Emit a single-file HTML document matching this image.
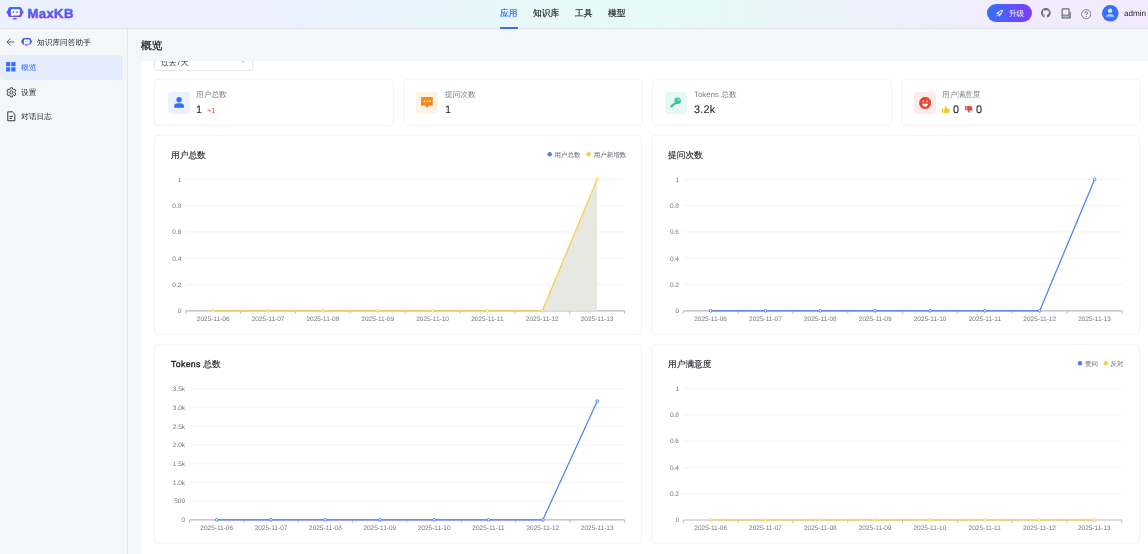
<!DOCTYPE html><html><head><meta charset="utf-8"><style>
html,body{text-rendering:geometricPrecision;-webkit-font-smoothing:antialiased;margin:0;padding:0;width:1148px;height:554px;overflow:hidden;background:#f5f6f7;font-family:"Liberation Sans",sans-serif}
.t{position:absolute;white-space:nowrap;will-change:transform}
.b{position:absolute;will-change:transform}
</style></head><body>
<div class="b" style="left:0.00px;top:0.00px;width:1148.00px;height:29.00px;background:linear-gradient(90deg,#ebf1ff 24.34%,#e5fbf8 56.18%,#f2ebfe 90.18%);border-bottom:1px solid #e1e6f0;box-sizing:border-box"></div>
<svg class="b" style="left:6.06px;top:5.90px" width="20.00" height="16.00" viewBox="0 0 20.000 16.000"><defs><linearGradient id="lg" x1="0" y1="0" x2="0" y2="1"><stop offset="0" stop-color="#3370ff"/><stop offset="1" stop-color="#7f3bf5"/></linearGradient></defs><g transform="translate(2 1) scale(1.0)">
<rect x="0" y="0" width="13.94" height="10.1" rx="2.6" fill="url(#lg)"/>
<path d="M3.74 2.3h7.3c.45 0 .8.35.8.8v4.7c0 .45-.35.8-.8.8H5.2L3.7 9.4 3.3 8.5c-.25-.1-.36-.4-.36-.7V3.1c0-.45.35-.8.8-.8z" fill="#fff"/>
<rect x="-1.3" y="3.6" width="1.4" height="3.2" rx=".3" fill="#5560f8"/>
<rect x="13.84" y="3.6" width="1.5" height="3.2" rx=".3" fill="#5d58f8"/>
<rect x="4.74" y="4.1" width="1.3" height="1.9" rx=".6" fill="#4466fb"/>
<rect x="8.44" y="4.1" width="1.3" height="1.9" rx=".6" fill="#4466fb"/>
<rect x="5.04" y="10.9" width="3.6" height="1.5" rx=".3" fill="#4a62fb"/>
</g></svg>
<svg class="b" style="left:26px;top:4px" width="52" height="20" viewBox="0 0 52 20">
<defs><linearGradient id="lg3" x1="0" y1="0" x2="0" y2="1"><stop offset="0.2" stop-color="#3370ff"/><stop offset="0.85" stop-color="#7f3bf5"/></linearGradient></defs>
<text x="1.6" y="13.8" font-family="Liberation Sans" font-weight="700" font-size="13.1" fill="url(#lg3)" stroke="url(#lg3)" stroke-width="0.5" letter-spacing="0.35">MaxKB</text>
</svg>
<div class="t" style="left:500.00px;top:7.24px;font-size:8.75px;line-height:13.12px;color:#3370ff;font-weight:500;-webkit-text-stroke:0.2px currentColor">应用</div>
<div class="t" style="left:533.00px;top:7.24px;font-size:8.75px;line-height:13.12px;color:#1f2329;font-weight:500;-webkit-text-stroke:0.2px currentColor">知识库</div>
<div class="t" style="left:575.20px;top:7.24px;font-size:8.75px;line-height:13.12px;color:#1f2329;font-weight:500;-webkit-text-stroke:0.2px currentColor">工具</div>
<div class="t" style="left:608.00px;top:7.24px;font-size:8.75px;line-height:13.12px;color:#1f2329;font-weight:500;-webkit-text-stroke:0.2px currentColor">模型</div>
<div class="b" style="left:500.00px;top:27.00px;width:17.60px;height:1.60px;background:#3370ff"></div>
<div class="b" style="left:987.30px;top:4.40px;width:44.90px;height:17.80px;background:linear-gradient(90deg,#3370ff,#7f3bf5);border-radius:9px"></div>
<svg class="b" style="left:996.4px;top:9.5px" width="6.8" height="6.8" viewBox="0 0 16 16"><g fill="none" stroke="#fff" stroke-width="2.2" stroke-linejoin="round" stroke-linecap="round"><path d="M14.8 1.2C9.8 1.2 6.3 4.2 4.8 8.4l2.8 2.8c4.2-1.5 7.2-5 7.2-10z"/><path d="M4.8 8.4H1.6l2.6-3.2h3M7.6 11.2v3.2l3.2-2.6v-3"/><path d="M3.4 12.6l-1.6 1.6"/></g></svg>
<div class="t" style="left:1008.50px;top:8.00px;font-size:7.6px;line-height:11.40px;color:#ffffff;font-weight:400;">升级</div>
<svg class="b" style="left:1041.3px;top:8.3px" width="9.7" height="9.7" viewBox="0 0 16 16"><path fill="#646a73" d="M8 0C3.58 0 0 3.58 0 8c0 3.54 2.29 6.53 5.47 7.59.4.07.55-.17.55-.38 0-.19-.01-.82-.01-1.49-2.01.37-2.53-.49-2.69-.94-.09-.23-.48-.94-.82-1.13-.28-.15-.68-.52-.01-.53.63-.01 1.080.58 1.23.82.72 1.21 1.87.87 2.33.66.07-.52.28-.87.51-1.07-1.78-.2-3.64-.89-3.64-3.95 0-.87.31-1.59.82-2.15-.08-.2-.36-1.02.08-2.12 0 0 .67-.21 2.2.82.64-.18 1.32-.27 2-.27.68 0 1.36.09 2 .27 1.53-1.04 2.2-.82 2.2-.82.44 1.1.16 1.92.08 2.12.51.56.82 1.27.82 2.15 0 3.07-1.87 3.75-3.65 3.95.29.25.54.73.54 1.48 0 1.07-.01 1.93-.01 2.2 0 .21.15.46.55.38A8.013 8.013 0 0016 8c0-4.42-3.58-8-8-8z"/></svg>
<svg class="b" style="left:1061.4px;top:8px" width="10" height="10.8" viewBox="0 0 10 10.8"><path d="M1.2 9.6V1.8c0-.5.3-.9.9-.9h5c.5 0 .9.4.9.9v7.8" fill="none" stroke="#646a73" stroke-width="1.15"/><path d="M1.2 7.2h6.8" stroke="#646a73" stroke-width="1.1"/><path d="M0.6 9.9h8.6V4.2" fill="none" stroke="#646a73" stroke-width="1.2"/><rect x="1.8" y="7.7" width="5.8" height="1.5" fill="#aeb2b9"/></svg>
<svg class="b" style="left:1081px;top:8.6px" width="10.4" height="10.4" viewBox="0 0 16 16"><circle cx="8" cy="8" r="7" fill="none" stroke="#646a73" stroke-width="1.3"/><path d="M5.9 6.3c0-1.3 1-2.2 2.1-2.2s2.2.9 2.2 2c0 1.5-2.1 1.6-2.1 3.2" fill="none" stroke="#646a73" stroke-width="1.4"/><circle cx="8.1" cy="11.6" r=".9" fill="#646a73"/></svg>
<svg class="b" style="left:1102.2px;top:5.0px" width="16.6" height="16.6" viewBox="0 0 24 24"><defs><linearGradient id="av" x1="0" y1="0" x2="0" y2="1"><stop offset="0" stop-color="#fff" stop-opacity=".85"/><stop offset="1" stop-color="#fff" stop-opacity=".25"/></linearGradient></defs><circle cx="12" cy="12" r="12" fill="#3370ff"/><circle cx="11.7" cy="8.2" r="3.3" fill="#fff" fill-opacity=".8"/><path d="M5.2 18c0-3 3-4.6 6.5-4.6s6.5 1.6 6.5 4.6z" fill="url(#av)"/></svg>
<div class="t" style="left:1124.00px;top:7.92px;font-size:8.1px;line-height:12.15px;color:#1f2329;font-weight:400;">admin</div>
<div class="b" style="left:0.00px;top:29.00px;width:128.00px;height:525.00px;background:#f5f6f7;border-right:1px solid #e4e6e9;box-sizing:border-box"></div>
<svg class="b" style="left:5.8px;top:38px" width="8.6" height="8" viewBox="0 0 16 15"><path d="M15.2 7.5H2.2M8.2 1.1L1.6 7.5l6.6 6.4" fill="none" stroke="#1f2329" stroke-width="1.35"/></svg>
<svg class="b" style="left:19.90px;top:36.80px" width="13.10" height="10.48" viewBox="0 0 13.100 10.480"><defs><linearGradient id="lg2" x1="0" y1="0" x2="0" y2="1"><stop offset="0" stop-color="#3370ff"/><stop offset="1" stop-color="#7f3bf5"/></linearGradient></defs><g transform="translate(2 1) scale(0.655)">
<rect x="0" y="0" width="13.94" height="10.1" rx="2.6" fill="url(#lg2)"/>
<path d="M3.74 2.3h7.3c.45 0 .8.35.8.8v4.7c0 .45-.35.8-.8.8H5.2L3.7 9.4 3.3 8.5c-.25-.1-.36-.4-.36-.7V3.1c0-.45.35-.8.8-.8z" fill="#fff"/>
<rect x="-1.3" y="3.6" width="1.4" height="3.2" rx=".3" fill="#5560f8"/>
<rect x="13.84" y="3.6" width="1.5" height="3.2" rx=".3" fill="#5d58f8"/>
<rect x="4.74" y="4.1" width="1.3" height="1.9" rx=".6" fill="#4466fb"/>
<rect x="8.44" y="4.1" width="1.3" height="1.9" rx=".6" fill="#4466fb"/>
<rect x="5.04" y="10.9" width="3.6" height="1.5" rx=".3" fill="#4a62fb"/>
</g></svg>
<div class="t" style="left:37.40px;top:37.12px;font-size:7.7px;line-height:11.55px;color:#1f2329;font-weight:500;">知识库问答助手</div>
<div class="b" style="left:0.00px;top:55.00px;width:122.80px;height:24.50px;background:#e5ecfb;border-radius:4px"></div>
<svg class="b" style="left:6.3px;top:62.3px" width="9.6" height="9.6" viewBox="0 0 10 10"><rect x="0" y="0" width="4.4" height="4.4" rx=".5" fill="#3370ff"/><rect x="5.5" y="0" width="4.4" height="4.4" rx=".5" fill="#3370ff"/><rect x="0" y="5.5" width="4.4" height="4.4" rx=".5" fill="#3370ff"/><rect x="5.5" y="5.5" width="4.4" height="4.4" rx=".5" fill="#3370ff"/></svg>
<div class="t" style="left:20.80px;top:61.82px;font-size:7.7px;line-height:11.55px;color:#3370ff;font-weight:500;">概览</div>
<svg class="b" style="left:5.6px;top:86.6px" width="10.8" height="10.8" viewBox="0 0 16 16"><path fill="none" stroke="#1f2329" stroke-width="1.3" stroke-linejoin="round" d="M6.6 1.2h2.8l.5 2 1.3.75 2-.6 1.4 2.4-1.5 1.45v1.5l1.5 1.45-1.4 2.4-2-.6-1.3.75-.5 2H6.6l-.5-2-1.3-.75-2 .6-1.4-2.4 1.5-1.45v-1.5L1.4 5.75l1.4-2.4 2 .6 1.3-.75z"/><circle cx="8" cy="8" r="2.3" fill="none" stroke="#1f2329" stroke-width="1.3"/></svg>
<div class="t" style="left:20.80px;top:86.82px;font-size:7.7px;line-height:11.55px;color:#1f2329;font-weight:500;">设置</div>
<svg class="b" style="left:6.8px;top:111.1px" width="8.6" height="10.6" viewBox="0 0 12 15"><path fill="none" stroke="#1f2329" stroke-width="1.3" stroke-linejoin="round" d="M1 1.2h6.5L11 4.7v9.1H1z"/><path fill="none" stroke="#1f2329" stroke-width="1.3" d="M3.5 7.5h5M3.5 10.3h3.5"/></svg>
<div class="t" style="left:20.80px;top:111.02px;font-size:7.7px;line-height:11.55px;color:#1f2329;font-weight:500;">对话日志</div>
<div class="b" style="left:128.00px;top:29.00px;width:1020.00px;height:525.00px;background:#f5f6f7"></div>
<div class="t" style="left:140.90px;top:39.21px;font-size:10.65px;line-height:15.98px;color:#1f2329;font-weight:500;-webkit-text-stroke:0.3px #1f2329">概览</div>
<div class="b" style="left:141px;top:60.8px;width:1007px;height:493.2px;background:#fff;overflow:hidden">
<div class="b" style="left:13.3px;top:-8px;width:98.8px;height:17.9px;border:1px solid #e4e6e9;border-radius:3px;box-sizing:border-box"></div>
<div class="t" style="left:20px;top:-4.3px;font-size:7.7px;line-height:12px;color:#1f2329">过去7天</div>
<svg class="b" style="left:99.9px;top:-0.6px" width="4.4" height="3" viewBox="0 0 10 6.6"><path d="M1 1l4 4.2 4-4.2" fill="none" stroke="#8f959e" stroke-width="1.3"/></svg>
</div>
<div class="b" style="left:154.30px;top:79.30px;width:239.60px;height:46.70px;border:1px solid #f2f3f4;border-radius:4px;box-sizing:border-box;background:#fff"></div>
<div class="b" style="left:402.75px;top:79.30px;width:239.60px;height:46.70px;border:1px solid #f2f3f4;border-radius:4px;box-sizing:border-box;background:#fff"></div>
<div class="b" style="left:651.70px;top:79.30px;width:239.60px;height:46.70px;border:1px solid #f2f3f4;border-radius:4px;box-sizing:border-box;background:#fff"></div>
<div class="b" style="left:900.60px;top:79.30px;width:239.60px;height:46.70px;border:1px solid #f2f3f4;border-radius:4px;box-sizing:border-box;background:#fff"></div>
<div class="b" style="left:167.90px;top:91.80px;width:21.80px;height:21.90px;background:#ebf1ff;border-radius:3.5px"></div>
<div class="b" style="left:416.35px;top:91.80px;width:21.80px;height:21.90px;background:#fff3e6;border-radius:3.5px"></div>
<div class="b" style="left:665.30px;top:91.80px;width:21.80px;height:21.90px;background:#e6f8f4;border-radius:3.5px"></div>
<div class="b" style="left:914.20px;top:91.80px;width:21.80px;height:21.90px;background:#fdeceb;border-radius:3.5px"></div>
<svg class="b" style="left:173.60px;top:97.2px" width="10.2" height="10.8" viewBox="0 0 10.2 10.8"><circle cx="5.1" cy="2.75" r="2.65" fill="#3370ff"/><path d="M0.1 10.8V9.4c0-1.9 1.5-3.1 3.4-3.1h3.2c1.9 0 3.4 1.2 3.4 3.1v1.4z" fill="#3370ff"/></svg>
<svg class="b" style="left:421.05px;top:97.2px" width="12" height="11.4" viewBox="0 0 12 11.4"><path d="M0.1 0.1h11.7v8.6H7.7L6.1 11.2 4.5 8.7H0.1z" fill="#f5891f"/><rect x="2.8" y="3.65" width="1.3" height="1.3" fill="#fff"/><rect x="5.5" y="3.65" width="1.3" height="1.3" fill="#fff"/><rect x="8.2" y="3.65" width="1.3" height="1.3" fill="#fff"/></svg>
<svg class="b" style="left:670.40px;top:97.3px" width="11" height="11" viewBox="0 0 11 11"><circle cx="7.7" cy="3.7" r="3.2" fill="#3cc2a4"/><rect x="7.9" y="2.1" width="1.4" height="1.4" fill="#e6f8f4"/><path d="M5.9 5.6L1.2 9.4" stroke="#3cc2a4" stroke-width="2.0" stroke-linecap="round"/></svg>
<svg class="b" style="left:918.50px;top:96.8px" width="12.4" height="12.4" viewBox="0 0 12 12"><circle cx="5.95" cy="5.8" r="5.9" fill="#e64a3b"/><rect x="3.5" y="3.5" width="1.1" height="1.5" rx=".4" fill="#fff"/><rect x="7.3" y="3.5" width="1.1" height="1.5" rx=".4" fill="#fff"/><path d="M3.3 6.5h5.3c0 1.6-1.1 2.8-2.65 2.8S3.3 8.1 3.3 6.5z" fill="#fff"/></svg>
<div class="t" style="left:196.10px;top:89.02px;font-size:7.7px;line-height:11.55px;color:#767c84;font-weight:500;">用户总数</div>
<div class="t" style="left:444.55px;top:89.02px;font-size:7.7px;line-height:11.55px;color:#767c84;font-weight:500;">提问次数</div>
<div class="t" style="left:693.50px;top:89.02px;font-size:7.7px;line-height:11.55px;color:#767c84;font-weight:500;letter-spacing:0.1px">Tokens 总数</div>
<div class="t" style="left:942.40px;top:89.02px;font-size:7.7px;line-height:11.55px;color:#767c84;font-weight:500;">用户满意度</div>
<div class="t" style="left:195.80px;top:101.93px;font-size:10.9px;line-height:16.35px;color:#1f2329;font-weight:400;-webkit-text-stroke:0.05px #1f2329">1</div>
<div class="t" style="left:207.30px;top:106.03px;font-size:7.3px;line-height:10.95px;color:#f54a45;font-weight:400;">+1</div>
<div class="t" style="left:444.75px;top:101.93px;font-size:10.9px;line-height:16.35px;color:#1f2329;font-weight:400;-webkit-text-stroke:0.05px #1f2329">1</div>
<div class="t" style="left:693.80px;top:101.93px;font-size:10.9px;line-height:16.35px;color:#1f2329;font-weight:400;-webkit-text-stroke:0.1px #1f2329;letter-spacing:0.2px">3.2k</div>
<svg class="b" style="left:942.20px;top:106px" width="7.8" height="7" viewBox="0 0 16 15" preserveAspectRatio="none"><path d="M0 6h3.2v9H0zM4.4 6.2L8 0.4c1.2-.3 2.3.5 2.1 1.8L9.6 5.2H14c1.2 0 2.1 1.1 1.8 2.3l-1.6 6c-.2.9-1 1.5-1.9 1.5H4.4z" fill="#f8c52c"/></svg>
<div class="t" style="left:952.60px;top:102.23px;font-size:10.9px;line-height:16.35px;color:#1f2329;font-weight:400;-webkit-text-stroke:0.1px #1f2329">0</div>
<svg class="b" style="left:965.00px;top:106px" width="7.6" height="7" viewBox="0 0 16 15" preserveAspectRatio="none"><path d="M0 0h3.2v9H0zM4.4 8.8L8 14.6c1.2.3 2.3-.5 2.1-1.8L9.6 9.8H14c1.2 0 2.1-1.1 1.8-2.3l-1.6-6C14 .6 13.2 0 12.3 0H4.4z" fill="#e94b3e"/></svg>
<div class="t" style="left:975.70px;top:102.23px;font-size:10.9px;line-height:16.35px;color:#1f2329;font-weight:400;-webkit-text-stroke:0.1px #1f2329">0</div>
<div class="b" style="left:154.30px;top:135.10px;width:488.10px;height:200.00px;border:1px solid #f2f3f4;border-radius:4px;box-sizing:border-box;background:#fff"></div>
<div class="b" style="left:651.20px;top:135.10px;width:488.60px;height:200.00px;border:1px solid #f2f3f4;border-radius:4px;box-sizing:border-box;background:#fff"></div>
<div class="b" style="left:154.30px;top:344.00px;width:488.10px;height:200.00px;border:1px solid #f2f3f4;border-radius:4px;box-sizing:border-box;background:#fff"></div>
<div class="b" style="left:651.20px;top:344.00px;width:488.60px;height:200.00px;border:1px solid #f2f3f4;border-radius:4px;box-sizing:border-box;background:#fff"></div>
<svg class="b" style="left:0;top:0" width="1148" height="554" font-family="Liberation Sans, sans-serif"><text x="181.40" y="313.10" text-anchor="end" font-size="6.5" fill="#737982">0</text><line x1="186.00" y1="284.52" x2="624.50" y2="284.52" stroke="#f2f3f4" stroke-width="1"/><text x="181.40" y="286.82" text-anchor="end" font-size="6.5" fill="#737982">0.2</text><line x1="186.00" y1="258.24" x2="624.50" y2="258.24" stroke="#f2f3f4" stroke-width="1"/><text x="181.40" y="260.54" text-anchor="end" font-size="6.5" fill="#737982">0.4</text><line x1="186.00" y1="231.96" x2="624.50" y2="231.96" stroke="#f2f3f4" stroke-width="1"/><text x="181.40" y="234.26" text-anchor="end" font-size="6.5" fill="#737982">0.6</text><line x1="186.00" y1="205.68" x2="624.50" y2="205.68" stroke="#f2f3f4" stroke-width="1"/><text x="181.40" y="207.98" text-anchor="end" font-size="6.5" fill="#737982">0.8</text><line x1="186.00" y1="179.40" x2="624.50" y2="179.40" stroke="#f2f3f4" stroke-width="1"/><text x="181.40" y="181.70" text-anchor="end" font-size="6.5" fill="#737982">1</text><line x1="185.80" y1="310.80" x2="624.50" y2="310.80" stroke="#b8bac0" stroke-width="1.2"/><line x1="185.80" y1="310.80" x2="185.80" y2="313.60" stroke="#b8bac0" stroke-width="1"/><line x1="240.64" y1="310.80" x2="240.64" y2="313.60" stroke="#b8bac0" stroke-width="1"/><line x1="295.48" y1="310.80" x2="295.48" y2="313.60" stroke="#b8bac0" stroke-width="1"/><line x1="350.31" y1="310.80" x2="350.31" y2="313.60" stroke="#b8bac0" stroke-width="1"/><line x1="405.15" y1="310.80" x2="405.15" y2="313.60" stroke="#b8bac0" stroke-width="1"/><line x1="459.99" y1="310.80" x2="459.99" y2="313.60" stroke="#b8bac0" stroke-width="1"/><line x1="514.83" y1="310.80" x2="514.83" y2="313.60" stroke="#b8bac0" stroke-width="1"/><line x1="569.66" y1="310.80" x2="569.66" y2="313.60" stroke="#b8bac0" stroke-width="1"/><line x1="624.50" y1="310.80" x2="624.50" y2="313.60" stroke="#b8bac0" stroke-width="1"/><text x="213.22" y="320.60" text-anchor="middle" font-size="6.5" fill="#737982">2025-11-06</text><text x="268.06" y="320.60" text-anchor="middle" font-size="6.5" fill="#737982">2025-11-07</text><text x="322.89" y="320.60" text-anchor="middle" font-size="6.5" fill="#737982">2025-11-08</text><text x="377.73" y="320.60" text-anchor="middle" font-size="6.5" fill="#737982">2025-11-09</text><text x="432.57" y="320.60" text-anchor="middle" font-size="6.5" fill="#737982">2025-11-10</text><text x="487.41" y="320.60" text-anchor="middle" font-size="6.5" fill="#737982">2025-11-11</text><text x="542.24" y="320.60" text-anchor="middle" font-size="6.5" fill="#737982">2025-11-12</text><text x="597.08" y="320.60" text-anchor="middle" font-size="6.5" fill="#737982">2025-11-13</text><polygon points="213.22,310.80 213.22,310.80 268.06,310.80 322.89,310.80 377.73,310.80 432.57,310.80 487.41,310.80 542.24,310.80 597.08,179.40 597.08,310.80" fill="#e7e8e2"/><polyline points="213.22,310.80 268.06,310.80 322.89,310.80 377.73,310.80 432.57,310.80 487.41,310.80 542.24,310.80 597.08,179.40" fill="none" stroke="#f9cd4a" stroke-width="1.2" stroke-linejoin="round"/><circle cx="213.22" cy="310.80" r="1.35" fill="#fff" stroke="#f9cd4a" stroke-width="1.0"/><circle cx="268.06" cy="310.80" r="1.35" fill="#fff" stroke="#f9cd4a" stroke-width="1.0"/><circle cx="322.89" cy="310.80" r="1.35" fill="#fff" stroke="#f9cd4a" stroke-width="1.0"/><circle cx="377.73" cy="310.80" r="1.35" fill="#fff" stroke="#f9cd4a" stroke-width="1.0"/><circle cx="432.57" cy="310.80" r="1.35" fill="#fff" stroke="#f9cd4a" stroke-width="1.0"/><circle cx="487.41" cy="310.80" r="1.35" fill="#fff" stroke="#f9cd4a" stroke-width="1.0"/><circle cx="542.24" cy="310.80" r="1.35" fill="#fff" stroke="#f9cd4a" stroke-width="1.0"/><circle cx="597.08" cy="179.40" r="1.35" fill="#fff" stroke="#f9cd4a" stroke-width="1.0"/><circle cx="549.70" cy="154.30" r="2.2" fill="#4a7ef7"/><text x="554.60" y="156.60" font-size="6.5" fill="#5f656e">用户总数</text><circle cx="588.60" cy="154.30" r="2.2" fill="#f9cd4a"/><text x="593.80" y="156.60" font-size="6.5" fill="#5f656e">用户新增数</text></svg>
<div class="t" style="left:170.90px;top:148.67px;font-size:8.7px;line-height:13.05px;color:#1f2329;font-weight:500;-webkit-text-stroke:0.15px #1f2329">用户总数</div>
<svg class="b" style="left:0;top:0" width="1148" height="554" font-family="Liberation Sans, sans-serif"><text x="679.00" y="313.10" text-anchor="end" font-size="6.5" fill="#737982">0</text><line x1="683.40" y1="284.52" x2="1122.00" y2="284.52" stroke="#f2f3f4" stroke-width="1"/><text x="679.00" y="286.82" text-anchor="end" font-size="6.5" fill="#737982">0.2</text><line x1="683.40" y1="258.24" x2="1122.00" y2="258.24" stroke="#f2f3f4" stroke-width="1"/><text x="679.00" y="260.54" text-anchor="end" font-size="6.5" fill="#737982">0.4</text><line x1="683.40" y1="231.96" x2="1122.00" y2="231.96" stroke="#f2f3f4" stroke-width="1"/><text x="679.00" y="234.26" text-anchor="end" font-size="6.5" fill="#737982">0.6</text><line x1="683.40" y1="205.68" x2="1122.00" y2="205.68" stroke="#f2f3f4" stroke-width="1"/><text x="679.00" y="207.98" text-anchor="end" font-size="6.5" fill="#737982">0.8</text><line x1="683.40" y1="179.40" x2="1122.00" y2="179.40" stroke="#f2f3f4" stroke-width="1"/><text x="679.00" y="181.70" text-anchor="end" font-size="6.5" fill="#737982">1</text><line x1="683.20" y1="310.80" x2="1122.00" y2="310.80" stroke="#b8bac0" stroke-width="1.2"/><line x1="683.20" y1="310.80" x2="683.20" y2="313.60" stroke="#b8bac0" stroke-width="1"/><line x1="738.05" y1="310.80" x2="738.05" y2="313.60" stroke="#b8bac0" stroke-width="1"/><line x1="792.90" y1="310.80" x2="792.90" y2="313.60" stroke="#b8bac0" stroke-width="1"/><line x1="847.75" y1="310.80" x2="847.75" y2="313.60" stroke="#b8bac0" stroke-width="1"/><line x1="902.60" y1="310.80" x2="902.60" y2="313.60" stroke="#b8bac0" stroke-width="1"/><line x1="957.45" y1="310.80" x2="957.45" y2="313.60" stroke="#b8bac0" stroke-width="1"/><line x1="1012.30" y1="310.80" x2="1012.30" y2="313.60" stroke="#b8bac0" stroke-width="1"/><line x1="1067.15" y1="310.80" x2="1067.15" y2="313.60" stroke="#b8bac0" stroke-width="1"/><line x1="1122.00" y1="310.80" x2="1122.00" y2="313.60" stroke="#b8bac0" stroke-width="1"/><text x="710.62" y="320.60" text-anchor="middle" font-size="6.5" fill="#737982">2025-11-06</text><text x="765.48" y="320.60" text-anchor="middle" font-size="6.5" fill="#737982">2025-11-07</text><text x="820.33" y="320.60" text-anchor="middle" font-size="6.5" fill="#737982">2025-11-08</text><text x="875.17" y="320.60" text-anchor="middle" font-size="6.5" fill="#737982">2025-11-09</text><text x="930.03" y="320.60" text-anchor="middle" font-size="6.5" fill="#737982">2025-11-10</text><text x="984.88" y="320.60" text-anchor="middle" font-size="6.5" fill="#737982">2025-11-11</text><text x="1039.72" y="320.60" text-anchor="middle" font-size="6.5" fill="#737982">2025-11-12</text><text x="1094.58" y="320.60" text-anchor="middle" font-size="6.5" fill="#737982">2025-11-13</text><polyline points="710.62,310.80 765.48,310.80 820.33,310.80 875.17,310.80 930.03,310.80 984.88,310.80 1039.72,310.80 1094.58,179.40" fill="none" stroke="#4a7ef7" stroke-width="1.2" stroke-linejoin="round"/><circle cx="710.62" cy="310.80" r="1.35" fill="#fff" stroke="#4a7ef7" stroke-width="1.0"/><circle cx="765.48" cy="310.80" r="1.35" fill="#fff" stroke="#4a7ef7" stroke-width="1.0"/><circle cx="820.33" cy="310.80" r="1.35" fill="#fff" stroke="#4a7ef7" stroke-width="1.0"/><circle cx="875.17" cy="310.80" r="1.35" fill="#fff" stroke="#4a7ef7" stroke-width="1.0"/><circle cx="930.03" cy="310.80" r="1.35" fill="#fff" stroke="#4a7ef7" stroke-width="1.0"/><circle cx="984.88" cy="310.80" r="1.35" fill="#fff" stroke="#4a7ef7" stroke-width="1.0"/><circle cx="1039.72" cy="310.80" r="1.35" fill="#fff" stroke="#4a7ef7" stroke-width="1.0"/><circle cx="1094.58" cy="179.40" r="1.35" fill="#fff" stroke="#4a7ef7" stroke-width="1.0"/></svg>
<div class="t" style="left:668.10px;top:148.78px;font-size:8.7px;line-height:13.05px;color:#1f2329;font-weight:500;-webkit-text-stroke:0.15px #1f2329">提问次数</div>
<svg class="b" style="left:0;top:0" width="1148" height="554" font-family="Liberation Sans, sans-serif"><text x="185.10" y="522.10" text-anchor="end" font-size="6.5" fill="#737982">0</text><line x1="189.40" y1="501.09" x2="624.40" y2="501.09" stroke="#f2f3f4" stroke-width="1"/><text x="185.10" y="503.39" text-anchor="end" font-size="6.5" fill="#737982">500</text><line x1="189.40" y1="482.37" x2="624.40" y2="482.37" stroke="#f2f3f4" stroke-width="1"/><text x="185.10" y="484.67" text-anchor="end" font-size="6.5" fill="#737982">1.0k</text><line x1="189.40" y1="463.66" x2="624.40" y2="463.66" stroke="#f2f3f4" stroke-width="1"/><text x="185.10" y="465.96" text-anchor="end" font-size="6.5" fill="#737982">1.5k</text><line x1="189.40" y1="444.94" x2="624.40" y2="444.94" stroke="#f2f3f4" stroke-width="1"/><text x="185.10" y="447.24" text-anchor="end" font-size="6.5" fill="#737982">2.0k</text><line x1="189.40" y1="426.23" x2="624.40" y2="426.23" stroke="#f2f3f4" stroke-width="1"/><text x="185.10" y="428.53" text-anchor="end" font-size="6.5" fill="#737982">2.5k</text><line x1="189.40" y1="407.51" x2="624.40" y2="407.51" stroke="#f2f3f4" stroke-width="1"/><text x="185.10" y="409.81" text-anchor="end" font-size="6.5" fill="#737982">3.0k</text><line x1="189.40" y1="388.80" x2="624.40" y2="388.80" stroke="#f2f3f4" stroke-width="1"/><text x="185.10" y="391.10" text-anchor="end" font-size="6.5" fill="#737982">3.5k</text><line x1="189.50" y1="519.80" x2="624.40" y2="519.80" stroke="#b8bac0" stroke-width="1.2"/><line x1="189.50" y1="519.80" x2="189.50" y2="522.60" stroke="#b8bac0" stroke-width="1"/><line x1="243.86" y1="519.80" x2="243.86" y2="522.60" stroke="#b8bac0" stroke-width="1"/><line x1="298.23" y1="519.80" x2="298.23" y2="522.60" stroke="#b8bac0" stroke-width="1"/><line x1="352.59" y1="519.80" x2="352.59" y2="522.60" stroke="#b8bac0" stroke-width="1"/><line x1="406.95" y1="519.80" x2="406.95" y2="522.60" stroke="#b8bac0" stroke-width="1"/><line x1="461.31" y1="519.80" x2="461.31" y2="522.60" stroke="#b8bac0" stroke-width="1"/><line x1="515.67" y1="519.80" x2="515.67" y2="522.60" stroke="#b8bac0" stroke-width="1"/><line x1="570.04" y1="519.80" x2="570.04" y2="522.60" stroke="#b8bac0" stroke-width="1"/><line x1="624.40" y1="519.80" x2="624.40" y2="522.60" stroke="#b8bac0" stroke-width="1"/><text x="216.68" y="529.60" text-anchor="middle" font-size="6.5" fill="#737982">2025-11-06</text><text x="271.04" y="529.60" text-anchor="middle" font-size="6.5" fill="#737982">2025-11-07</text><text x="325.41" y="529.60" text-anchor="middle" font-size="6.5" fill="#737982">2025-11-08</text><text x="379.77" y="529.60" text-anchor="middle" font-size="6.5" fill="#737982">2025-11-09</text><text x="434.13" y="529.60" text-anchor="middle" font-size="6.5" fill="#737982">2025-11-10</text><text x="488.49" y="529.60" text-anchor="middle" font-size="6.5" fill="#737982">2025-11-11</text><text x="542.86" y="529.60" text-anchor="middle" font-size="6.5" fill="#737982">2025-11-12</text><text x="597.22" y="529.60" text-anchor="middle" font-size="6.5" fill="#737982">2025-11-13</text><polyline points="216.68,519.80 271.04,519.80 325.41,519.80 379.77,519.80 434.13,519.80 488.49,519.80 542.86,519.80 597.22,401.20" fill="none" stroke="#4a7ef7" stroke-width="1.2" stroke-linejoin="round"/><circle cx="216.68" cy="519.80" r="1.35" fill="#fff" stroke="#4a7ef7" stroke-width="1.0"/><circle cx="271.04" cy="519.80" r="1.35" fill="#fff" stroke="#4a7ef7" stroke-width="1.0"/><circle cx="325.41" cy="519.80" r="1.35" fill="#fff" stroke="#4a7ef7" stroke-width="1.0"/><circle cx="379.77" cy="519.80" r="1.35" fill="#fff" stroke="#4a7ef7" stroke-width="1.0"/><circle cx="434.13" cy="519.80" r="1.35" fill="#fff" stroke="#4a7ef7" stroke-width="1.0"/><circle cx="488.49" cy="519.80" r="1.35" fill="#fff" stroke="#4a7ef7" stroke-width="1.0"/><circle cx="542.86" cy="519.80" r="1.35" fill="#fff" stroke="#4a7ef7" stroke-width="1.0"/><circle cx="597.22" cy="401.20" r="1.35" fill="#fff" stroke="#4a7ef7" stroke-width="1.0"/></svg>
<div class="t" style="left:171.00px;top:358.08px;font-size:8.7px;line-height:13.05px;color:#1f2329;font-weight:500;-webkit-text-stroke:0.15px #1f2329"><span style="font-weight:400;letter-spacing:0.38px;-webkit-text-stroke:0.4px #1f2329">Tokens</span> 总数</div>
<svg class="b" style="left:0;top:0" width="1148" height="554" font-family="Liberation Sans, sans-serif"><text x="679.00" y="522.30" text-anchor="end" font-size="6.5" fill="#737982">0</text><line x1="683.30" y1="493.72" x2="1121.70" y2="493.72" stroke="#f2f3f4" stroke-width="1"/><text x="679.00" y="496.02" text-anchor="end" font-size="6.5" fill="#737982">0.2</text><line x1="683.30" y1="467.44" x2="1121.70" y2="467.44" stroke="#f2f3f4" stroke-width="1"/><text x="679.00" y="469.74" text-anchor="end" font-size="6.5" fill="#737982">0.4</text><line x1="683.30" y1="441.16" x2="1121.70" y2="441.16" stroke="#f2f3f4" stroke-width="1"/><text x="679.00" y="443.46" text-anchor="end" font-size="6.5" fill="#737982">0.6</text><line x1="683.30" y1="414.88" x2="1121.70" y2="414.88" stroke="#f2f3f4" stroke-width="1"/><text x="679.00" y="417.18" text-anchor="end" font-size="6.5" fill="#737982">0.8</text><line x1="683.30" y1="388.60" x2="1121.70" y2="388.60" stroke="#f2f3f4" stroke-width="1"/><text x="679.00" y="390.90" text-anchor="end" font-size="6.5" fill="#737982">1</text><line x1="683.30" y1="520.00" x2="1121.70" y2="520.00" stroke="#b8bac0" stroke-width="1.2"/><line x1="683.30" y1="520.00" x2="683.30" y2="522.80" stroke="#b8bac0" stroke-width="1"/><line x1="738.10" y1="520.00" x2="738.10" y2="522.80" stroke="#b8bac0" stroke-width="1"/><line x1="792.90" y1="520.00" x2="792.90" y2="522.80" stroke="#b8bac0" stroke-width="1"/><line x1="847.70" y1="520.00" x2="847.70" y2="522.80" stroke="#b8bac0" stroke-width="1"/><line x1="902.50" y1="520.00" x2="902.50" y2="522.80" stroke="#b8bac0" stroke-width="1"/><line x1="957.30" y1="520.00" x2="957.30" y2="522.80" stroke="#b8bac0" stroke-width="1"/><line x1="1012.10" y1="520.00" x2="1012.10" y2="522.80" stroke="#b8bac0" stroke-width="1"/><line x1="1066.90" y1="520.00" x2="1066.90" y2="522.80" stroke="#b8bac0" stroke-width="1"/><line x1="1121.70" y1="520.00" x2="1121.70" y2="522.80" stroke="#b8bac0" stroke-width="1"/><text x="710.70" y="529.80" text-anchor="middle" font-size="6.5" fill="#737982">2025-11-06</text><text x="765.50" y="529.80" text-anchor="middle" font-size="6.5" fill="#737982">2025-11-07</text><text x="820.30" y="529.80" text-anchor="middle" font-size="6.5" fill="#737982">2025-11-08</text><text x="875.10" y="529.80" text-anchor="middle" font-size="6.5" fill="#737982">2025-11-09</text><text x="929.90" y="529.80" text-anchor="middle" font-size="6.5" fill="#737982">2025-11-10</text><text x="984.70" y="529.80" text-anchor="middle" font-size="6.5" fill="#737982">2025-11-11</text><text x="1039.50" y="529.80" text-anchor="middle" font-size="6.5" fill="#737982">2025-11-12</text><text x="1094.30" y="529.80" text-anchor="middle" font-size="6.5" fill="#737982">2025-11-13</text><polyline points="710.70,520.00 765.50,520.00 820.30,520.00 875.10,520.00 929.90,520.00 984.70,520.00 1039.50,520.00 1094.30,520.00" fill="none" stroke="#f9cd4a" stroke-width="1.2" stroke-linejoin="round"/><circle cx="710.70" cy="520.00" r="1.35" fill="#fff" stroke="#f9cd4a" stroke-width="1.0"/><circle cx="765.50" cy="520.00" r="1.35" fill="#fff" stroke="#f9cd4a" stroke-width="1.0"/><circle cx="820.30" cy="520.00" r="1.35" fill="#fff" stroke="#f9cd4a" stroke-width="1.0"/><circle cx="875.10" cy="520.00" r="1.35" fill="#fff" stroke="#f9cd4a" stroke-width="1.0"/><circle cx="929.90" cy="520.00" r="1.35" fill="#fff" stroke="#f9cd4a" stroke-width="1.0"/><circle cx="984.70" cy="520.00" r="1.35" fill="#fff" stroke="#f9cd4a" stroke-width="1.0"/><circle cx="1039.50" cy="520.00" r="1.35" fill="#fff" stroke="#f9cd4a" stroke-width="1.0"/><circle cx="1094.30" cy="520.00" r="1.35" fill="#fff" stroke="#f9cd4a" stroke-width="1.0"/><circle cx="1080.00" cy="363.20" r="2.2" fill="#4a7ef7"/><text x="1084.90" y="365.50" font-size="6.5" fill="#5f656e">赞同</text><circle cx="1105.90" cy="363.20" r="2.2" fill="#f9cd4a"/><text x="1110.40" y="365.50" font-size="6.5" fill="#5f656e">反对</text></svg>
<div class="t" style="left:667.50px;top:358.28px;font-size:8.7px;line-height:13.05px;color:#1f2329;font-weight:500;-webkit-text-stroke:0.15px #1f2329">用户满意度</div>
</body></html>
